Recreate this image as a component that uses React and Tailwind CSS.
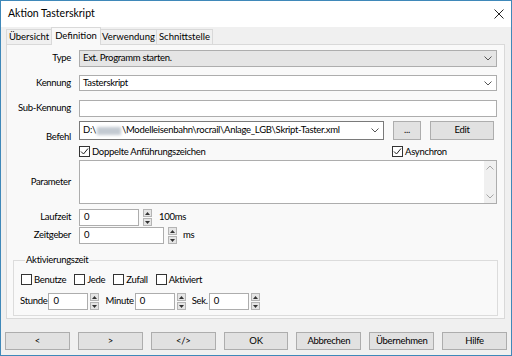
import clsx from "clsx";

const font = { fontFamily: "Lato, 'Liberation Sans', sans-serif" };

function Chevron({ up = false, color = "#555" }) {
  return (
    <svg width="8" height="5" viewBox="0 0 8 5">
      <path d={up ? "M0.5 4.5 L4 1 L7.5 4.5" : "M0.5 0.5 L4 4 L7.5 0.5"} stroke={color} fill="none" strokeWidth="1" />
    </svg>
  );
}

function Check({ checked, label, className }) {
  return (
    <div className={clsx("flex items-center gap-[2px] h-[11px]", className)}>
      <span className="w-[11px] h-[11px] border border-[#333] bg-white flex items-center justify-center shrink-0">
        {checked && (
          <svg width="9" height="9" viewBox="0 0 9 9">
            <path d="M1 4.5 L3.5 7 L8 1.5" stroke="#222" fill="none" strokeWidth="1" />
          </svg>
        )}
      </span>
      <span className="leading-[11px]">{label}</span>
    </div>
  );
}

function Spin({ className }) {
  return (
    <div className={clsx("flex flex-col gap-[1px] w-[9px] shrink-0", className)}>
      <div className="h-[8px] bg-[#e5e5e5] border border-[#b4b4b4] flex items-center justify-center">
        <svg width="5" height="3" viewBox="0 0 5 3"><path d="M0 3 L2.5 0 L5 3Z" fill="#333" /></svg>
      </div>
      <div className="h-[8px] bg-[#e5e5e5] border border-[#b4b4b4] flex items-center justify-center">
        <svg width="5" height="3" viewBox="0 0 5 3"><path d="M0 0 L2.5 3 L5 0Z" fill="#333" /></svg>
      </div>
    </div>
  );
}

function Row({ label, children, className, labelClass }) {
  return (
    <div className={clsx("flex items-center", className)}>
      <div className={clsx("w-[65px] text-right shrink-0 pr-[1px]", labelClass)}>{label}</div>
      <div className="flex-1 flex items-center ml-[7px] mr-[7px] h-full">{children}</div>
    </div>
  );
}

export default function App() {
  const buttons = ["<", ">", "</>", "OK", "Abbrechen", "Übernehmen", "Hilfe"];

  return (
    <div className="w-[512px] h-[356px] border border-[#3f88b9] flex flex-col text-[9.5px] tracking-[-0.3px] text-black overflow-hidden" style={font}>
      {/* Titelleiste */}
      <div className="h-[26px] bg-white flex items-center justify-between pl-[7px] pr-[7px] shrink-0">
        <span className="text-[10.5px] tracking-normal">Aktion Tasterskript</span>
        <svg width="10" height="10" viewBox="0 0 10 10">
          <path d="M0.5 0.5 L9.5 9.5 M9.5 0.5 L0.5 9.5" stroke="#222" strokeWidth="1" />
        </svg>
      </div>

      <div className="flex-1 bg-[#f0f0f0] px-[4px] flex flex-col">
        {/* Reiter */}
        <div className="flex items-end h-[18px] ml-[1px] relative z-10 -mb-[1px] tracking-normal">
          <div className="w-[46px] h-[16px] border border-[#d9d9d9] border-b-0 flex items-center justify-center">Übersicht</div>
          <div className="w-[50px] h-[18px] border border-[#d9d9d9] border-b-0 bg-[#f9f9f9] flex items-center justify-center -ml-[1px]">Definition</div>
          <div className="w-[56px] h-[16px] border border-[#d9d9d9] border-b-0 border-l-0 flex items-center justify-center">Verwendung</div>
          <div className="w-[56px] h-[16px] border border-[#d9d9d9] border-b-0 border-l-0 flex items-center justify-center">Schnittstelle</div>
        </div>

        {/* Seite */}
        <div className="h-[275px] ml-[1px] mr-[2px] border border-[#d9d9d9] bg-[#f9f9f9] flex flex-col">
          <Row label="Type" className="mt-[5px] h-[17px]">
            <div className="flex-1 h-full bg-[#e5e5e5] border border-[#adadad] flex items-center justify-between pl-[3px] pr-[4px]">
              <span>Ext. Programm starten.</span>
              <Chevron />
            </div>
          </Row>

          <Row label="Kennung" className="mt-[8px] h-[16px]">
            <div className="flex-1 h-full bg-white border border-[#adadad] flex items-center justify-between pl-[3px] pr-[4px]">
              <span>Tasterskript</span>
              <Chevron />
            </div>
          </Row>

          <Row label="Sub-Kennung" className="mt-[9px] h-[17px]">
            <div className="flex-1 h-full bg-white border border-[#adadad]" />
          </Row>

          <div className="flex mt-[4px] h-[19px]">
            <div className="w-[65px] text-right shrink-0 pr-[1px] self-end -mb-[4px]">Befehl</div>
            <div className="flex-1 flex items-center ml-[7px] mr-[10px]">
              <div className="w-[305px] h-full bg-white border border-[#7a7a7a] flex items-center justify-between pl-[3px] pr-[4px]">
                <span className="flex items-center whitespace-nowrap">
                  D:\<span className="inline-block w-[24px] h-[8px] mx-[1px] bg-[#c3cad2] blur-[1.5px]" />\Modelleisenbahn\rocrail\Anlage_LGB\Skript-Taster.xml
                </span>
                <Chevron />
              </div>
              <div className="w-[28px] h-[19px] ml-[9px] bg-[#e1e1e1] border border-[#adadad] flex items-center justify-center">...</div>
              <div className="w-[64px] h-[19px] ml-[9px] bg-[#e1e1e1] border border-[#adadad] flex items-center justify-center">Edit</div>
            </div>
          </div>

          <div className="flex mt-[6px] ml-[72px]">
            <Check checked label="Doppelte Anführungszeichen" className="w-[313px]" />
            <Check checked label="Asynchron" />
          </div>

          <Row label="Parameter" className="mt-[3px] h-[44px]">
            <div className="flex-1 h-full bg-white border border-[#adadad] flex justify-end">
              <div className="w-[12px] h-full bg-[#f0f0f0] flex flex-col items-center justify-between py-[4px]">
                <Chevron up color="#a6a6a6" />
                <Chevron color="#a6a6a6" />
              </div>
            </div>
          </Row>

          <Row label="Laufzeit" className="mt-[5px] h-[17px]">
            <div className="w-[60px] h-full bg-white border border-[#adadad] flex items-center pl-[4px]">0</div>
            <Spin className="ml-[4px]" />
            <span className="ml-[7px]">100ms</span>
          </Row>

          <Row label="Zeitgeber" className="mt-[1px] h-[17px]">
            <div className="w-[85px] h-full bg-white border border-[#adadad] flex items-center pl-[4px]">0</div>
            <Spin className="ml-[4px]" />
            <span className="ml-[6px]">ms</span>
          </Row>

          <fieldset className="mx-[6px] mt-[10px] border border-[#dcdcdc] pl-[7px] pb-[5px]">
            <legend className="ml-[4px] px-[1px] leading-[12px]">Aktivierungszeit</legend>
            <div className="flex items-center gap-[8px] mt-[8px]">
              <Check label="Benutze" />
              <Check label="Jede" />
              <Check label="Zufall" />
              <Check label="Aktiviert" />
            </div>
            <div className="flex items-center h-[17px] mt-[8px] -ml-[1px]">
              <span>Stunde</span>
              <div className="w-[40px] h-full ml-[1px] bg-white border border-[#adadad] flex items-center pl-[4px]">0</div>
              <Spin className="ml-[2px]" />
              <span className="ml-[6px]">Minute</span>
              <div className="w-[40px] h-full ml-[1px] bg-white border border-[#adadad] flex items-center pl-[4px]">0</div>
              <Spin className="ml-[2px]" />
              <span className="ml-[6px]">Sek.</span>
              <div className="w-[40px] h-full ml-[1px] bg-white border border-[#adadad] flex items-center pl-[4px]">0</div>
              <Spin className="ml-[2px]" />
            </div>
          </fieldset>
        </div>

        {/* Schaltflächen */}
        <div className="grid grid-cols-7 gap-[8px] mt-[13px] h-[18px]">
          {buttons.map((b) => (
            <div key={b} className="bg-[#e1e1e1] border border-[#adadad] flex items-center justify-center">
              {b}
            </div>
          ))}
        </div>
      </div>
    </div>
  );
}
